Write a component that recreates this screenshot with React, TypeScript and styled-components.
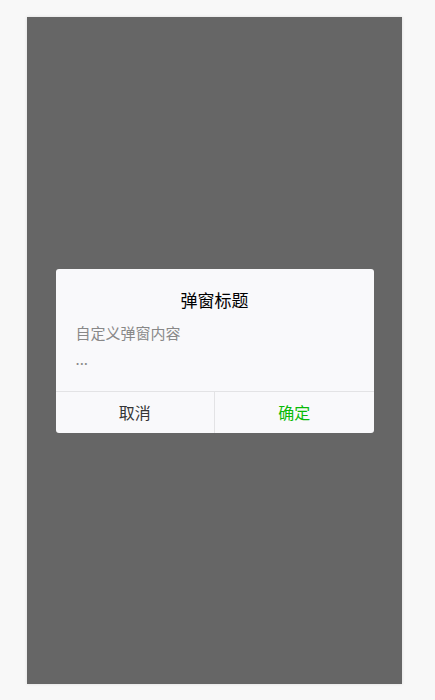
import React from "react";
import styled, { createGlobalStyle } from "styled-components";

const Global = createGlobalStyle`
  html, body { margin: 0; padding: 0; background: #f8f8f8; }
  body { font-family: "Noto Sans CJK SC", "Noto Sans", sans-serif; }
`;

const Page = styled.div`
  padding: 17px 0 16px 27px;
`;

const Phone = styled.div`
  position: relative;
  width: 375px;
  height: 667px;
  background: #666666;
  box-shadow: 0 0 3px rgba(0, 0, 0, 0.12);
  display: flex;
  align-items: center;
  justify-content: center;
`;

const Dialog = styled.div`
  width: 318px;
  background: #f9f9fb;
  border-radius: 3px;
  overflow: hidden;
  display: flex;
  flex-direction: column;
`;

const Body = styled.div`
  padding: 19px 20px 19px;
  display: flex;
  flex-direction: column;
`;

const Title = styled.div`
  font-size: 17px;
  line-height: 24px;
  color: #000;
  text-align: center;
  margin-bottom: 8px;
`;

const Content = styled.div`
  font-size: 15px;
  line-height: 26px;
  color: #888;
`;

const Footer = styled.div`
  display: flex;
  border-top: 1px solid #e3e3e5;
  height: 41px;
`;

const Btn = styled.div<{ $primary?: boolean }>`
  flex: 1;
  display: flex;
  align-items: center;
  justify-content: center;
  font-size: 16px;
  color: ${(p) => (p.$primary ? "#09bb07" : "#353535")};
  & + & {
    border-left: 1px solid #e3e3e5;
  }
`;

export default function App() {
  return (
    <>
      <Global />
      <Page>
        <Phone>
          <Dialog>
            <Body>
              <Title>弹窗标题</Title>
              <Content>
                自定义弹窗内容
                <br />
                ...
              </Content>
            </Body>
            <Footer>
              <Btn>取消</Btn>
              <Btn $primary>确定</Btn>
            </Footer>
          </Dialog>
        </Phone>
      </Page>
    </>
  );
}
